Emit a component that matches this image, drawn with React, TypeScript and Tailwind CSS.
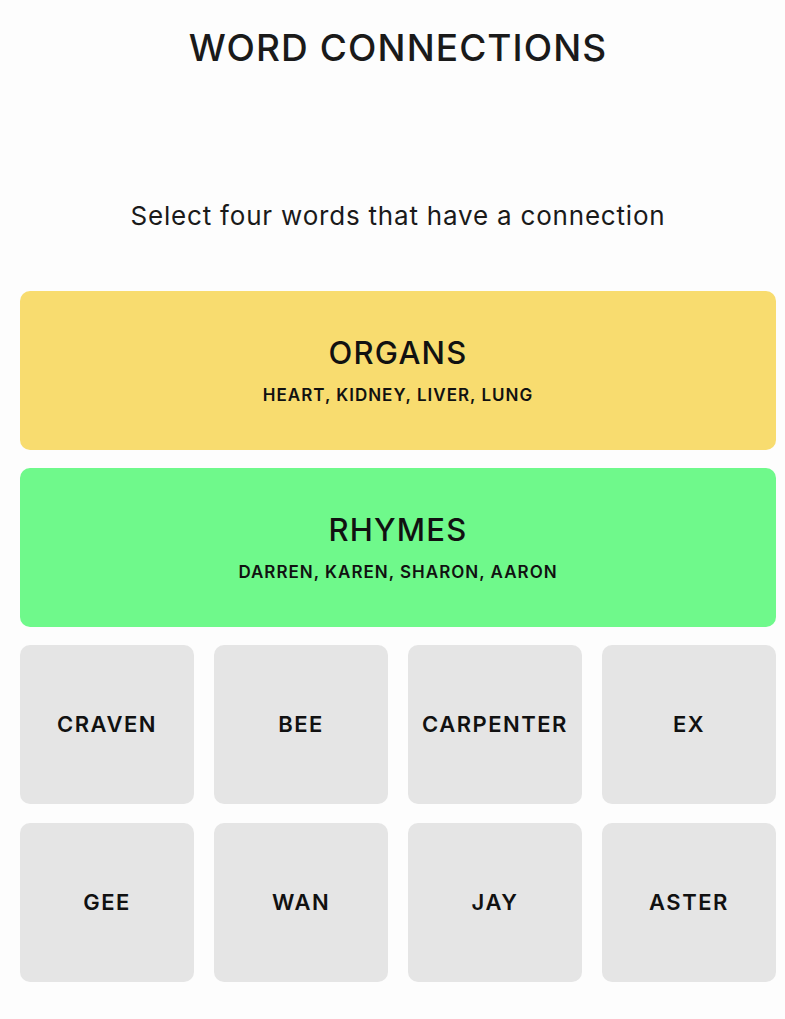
const solved = [
  { name: "ORGANS", words: "HEART, KIDNEY, LIVER, LUNG", color: "bg-[#f8dc6f]" },
  { name: "RHYMES", words: "DARREN, KAREN, SHARON, AARON", color: "bg-[#6ff98b]" },
];

const remaining = ["CRAVEN", "BEE", "CARPENTER", "EX", "GEE", "WAN", "JAY", "ASTER"];

export default function App() {
  return (
    <div className="h-screen overflow-hidden bg-[#fdfdfd] pl-[20px] pr-[9px] font-['Inter',sans-serif] text-[#1a1a1a]">
      <h1 className="pt-[28px] text-center text-[37px] font-medium leading-[40px] tracking-[1.1px]">
        WORD CONNECTIONS
      </h1>
      <p className="mt-[132px] text-center text-[26px] leading-[32px] tracking-[0.8px]">
        Select four words that have a connection
      </p>

      <div className="mt-[59px] flex flex-col gap-[18px]">
        {solved.map((group) => (
          <div
            key={group.name}
            className={`flex h-[159px] flex-col items-center justify-center gap-[16px] rounded-[10px] ${group.color}`}
          >
            <div className="text-[31px] font-medium leading-[32px] tracking-[1.2px] text-[#111]">{group.name}</div>
            <div className="text-[17px] font-semibold leading-[20px] tracking-[1px] text-[#111]">{group.words}</div>
          </div>
        ))}

        <div className="grid grid-cols-4 gap-x-[20px] gap-y-[19px]">
          {remaining.map((word) => (
            <button
              key={word}
              className="flex h-[159px] items-center justify-center rounded-[10px] bg-[#e5e5e5] text-[22px] font-semibold tracking-[1.5px] text-[#111]"
            >
              {word}
            </button>
          ))}
        </div>
      </div>
    </div>
  );
}
